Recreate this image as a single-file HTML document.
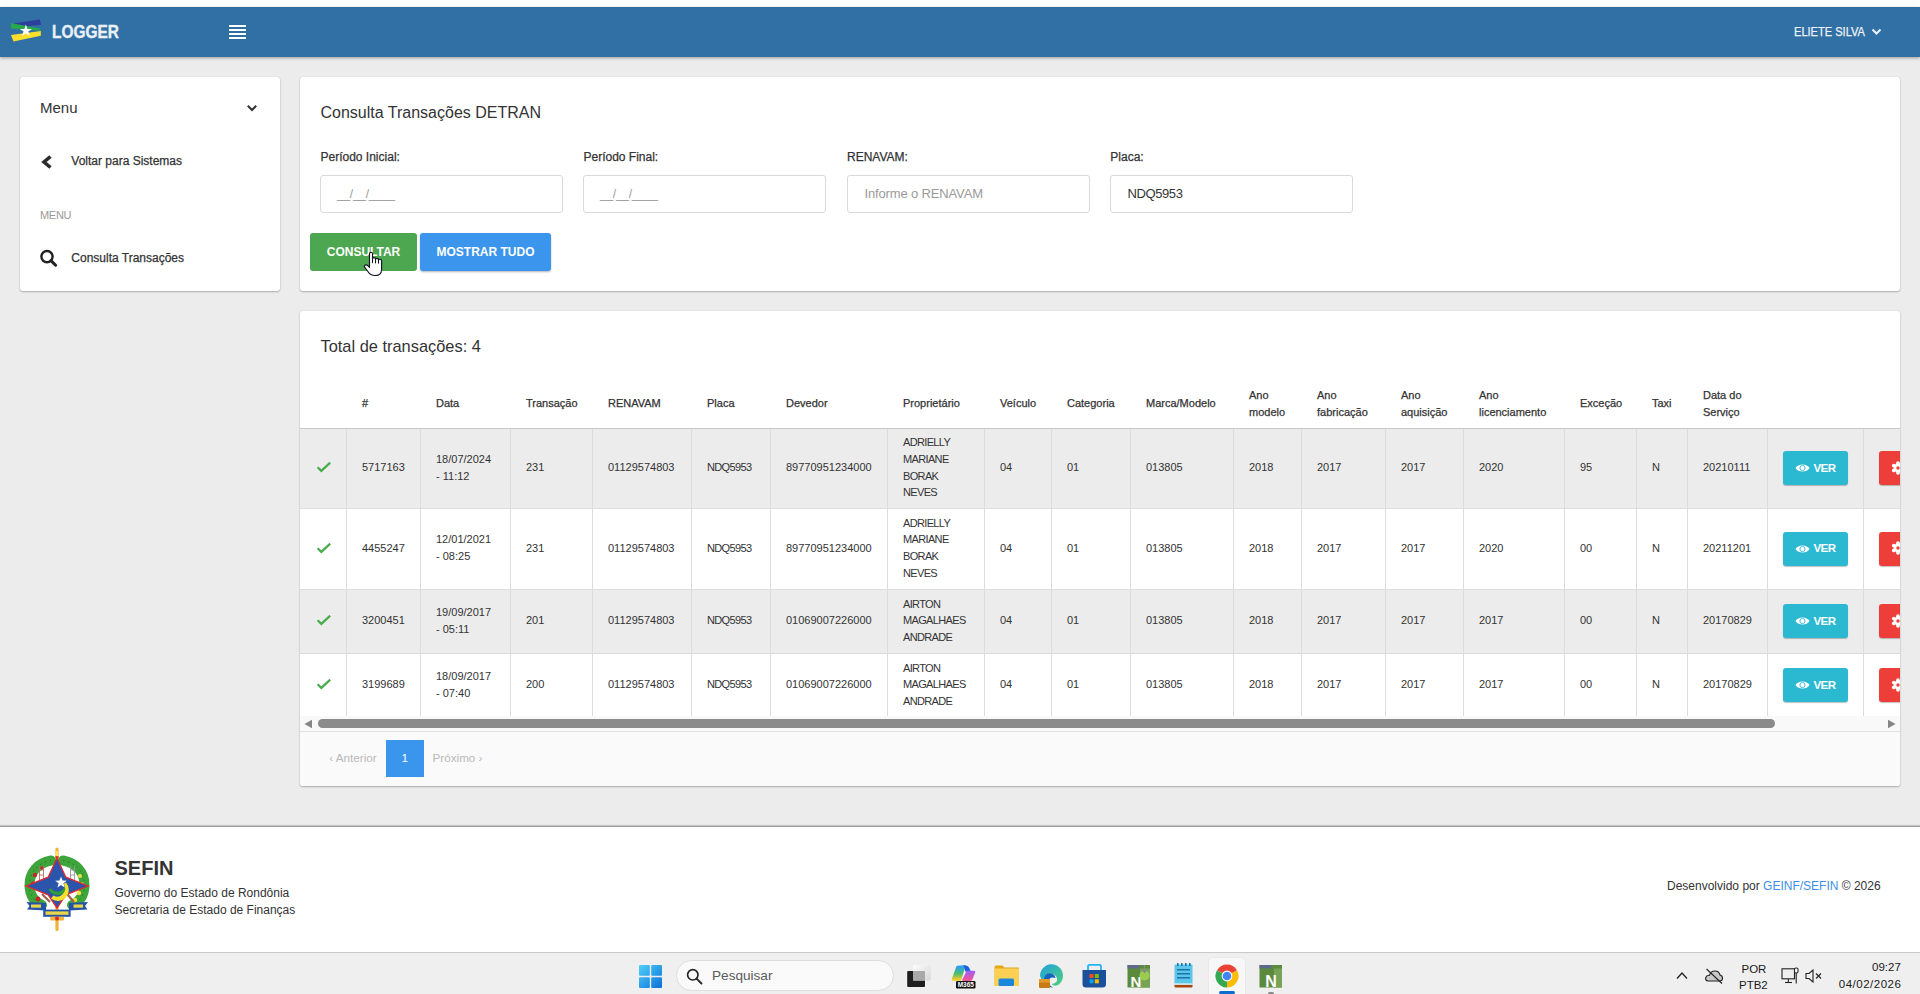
<!DOCTYPE html>
<html lang="pt-BR">
<head>
<meta charset="utf-8">
<title>Logger</title>
<style>
*{box-sizing:border-box;margin:0;padding:0}
html,body{width:1920px;height:994px;overflow:hidden}
body{position:relative;background:#ececec;font-family:"Liberation Sans",sans-serif;color:#333;font-size:12px}
.abs{position:absolute;white-space:nowrap}
.t{position:absolute;white-space:nowrap;line-height:1}
.topstrip{position:absolute;left:0;top:0;width:1920px;height:7px;background:#fff}
.header{position:absolute;left:0;top:7px;width:1920px;height:50px;background:#3170a5;box-shadow:0 1px 3px rgba(0,0,0,.35)}
.card{position:absolute;background:#fff;border-radius:3px;box-shadow:0 1px 2px rgba(0,0,0,.28),0 0 1px rgba(0,0,0,.12)}
.med{-webkit-text-stroke:0.25px currentColor}
.inp{position:absolute;top:175px;width:243px;height:38px;border:1px solid #d9d9d9;border-radius:3px;background:#fff}
.inp span{position:absolute;white-space:nowrap;line-height:1}
.ph{left:16px;top:12px;font-size:12px;color:#9a9a9a;letter-spacing:-0.25px}
.ph2{left:17px;top:11px;font-size:13px;color:#9a9a9a;letter-spacing:-0.15px}
.val{left:16.5px;top:11px;font-size:13px;color:#333;letter-spacing:-0.4px}
.btn{position:absolute;top:233px;height:38px;border-radius:3px;color:#fff;font-weight:700;font-size:12px;line-height:38px;text-align:center;white-space:nowrap}
.tbl{position:absolute;left:300px;top:379px;width:1600px;height:337px;overflow:hidden}
.stripe{position:absolute;left:0;width:1700px;background:#ececec}
.hb{position:absolute;left:0;width:1700px;height:1px;background:#dddddd}
.hb.hd{background:#c8c8c8}
.vb{position:absolute;top:50px;width:1px;height:300px;background:#dcdcdc}
.th{position:absolute;top:0;height:49px;display:flex;align-items:center;font-size:11px;line-height:17px;color:#333;-webkit-text-stroke:0.25px #333;white-space:nowrap}
.cell{position:absolute;display:flex;align-items:center;padding-bottom:2px;font-size:11px;line-height:16.6px;color:#333;white-space:nowrap}
.cell.up span{letter-spacing:-0.65px}
.ver{position:relative;width:65px;height:34px;background:#2bb9d1;border-radius:3px;box-shadow:0 1px 1px rgba(0,0,0,.25);display:flex;align-items:center;justify-content:center;color:#fff;font-weight:700;font-size:11.5px;letter-spacing:-0.5px;margin-top:1px}
.ver svg{margin-right:3px}
.del{position:relative;width:40px;height:34px;background:#ee3e3a;border-radius:3px;box-shadow:0 1px 1px rgba(0,0,0,.25);margin-top:1px}
.sbtrack{position:absolute;left:300px;top:716px;width:1600px;height:15px;background:#f9f9f9}
.pager{position:absolute;left:300px;top:731px;width:1600px;height:55px;background:#fafafa;border-top:1px solid #e3e3e3;border-radius:0 0 3px 3px}
.footer{position:absolute;left:0;top:826px;width:1920px;height:126px;background:#fff;border-top:1px solid #9a9a9a;box-shadow:0 -1px 1px rgba(0,0,0,.15)}
.taskbar{position:absolute;left:0;top:952px;width:1920px;height:42px;background:#efefef;border-top:1px solid #c9c9c9}
</style>
</head>
<body>
<div class="topstrip"></div>
<div class="header"></div>
<svg class="abs" style="left:10px;top:18px" width="34" height="26" viewBox="0 0 34 26">
  <polygon points="3,5.5 29.7,1.5 31.3,6.8 5,9.5" fill="#2d3f9c"/>
  <polygon points="1,5 1,10.4 30.5,12.8 30.5,10.8" fill="#27a84a"/>
  <polygon points="1,17 30.8,13 30.8,17.7 3.5,23.6" fill="#fbdd2c"/>
  <polygon points="15.9,6.5 17.4,10.9 22,10.9 18.3,13.6 19.7,18 15.9,15.3 12.1,18 13.5,13.6 9.8,10.9 14.4,10.9" fill="#fff"/>
</svg>
<div class="t" style="left:52px;top:22.5px;font-size:18.3px;font-weight:700;color:#eaf0f6;-webkit-text-stroke:0.35px #eaf0f6;transform:scaleX(0.846);transform-origin:0 0">LOGGER</div>
<div class="abs" style="left:229px;top:25px;width:17px;height:2px;background:#fff;box-shadow:0 0 1px rgba(20,80,140,.7)"></div>
<div class="abs" style="left:229px;top:29px;width:17px;height:2px;background:#fff;box-shadow:0 0 1px rgba(20,80,140,.7)"></div>
<div class="abs" style="left:229px;top:33px;width:17px;height:2px;background:#fff;box-shadow:0 0 1px rgba(20,80,140,.7)"></div>
<div class="abs" style="left:229px;top:37px;width:17px;height:2px;background:#fff;box-shadow:0 0 1px rgba(20,80,140,.7)"></div>
<div class="t med" style="left:1794px;top:25.8px;font-size:12.3px;color:#eef2f7;transform:scaleX(0.9);transform-origin:0 0">ELIETE SILVA</div>
<svg class="abs" style="left:1871px;top:28px" width="11" height="8" viewBox="0 0 11 8"><polyline points="1.5,1.5 5.5,5.5 9.5,1.5" fill="none" stroke="#eef2f7" stroke-width="2"/></svg>

<div class="card" style="left:20px;top:77px;width:260px;height:214px"></div>
<div class="t" style="left:40px;top:100px;font-size:15px;color:#333">Menu</div>
<svg class="abs" style="left:246px;top:104px" width="12" height="9" viewBox="0 0 12 9"><polyline points="1.8,1.8 6,6 10.2,1.8" fill="none" stroke="#333" stroke-width="2"/></svg>
<svg class="abs" style="left:40px;top:154px" width="14" height="16" viewBox="0 0 14 16"><polyline points="10.5,2.5 4,8 10.5,13.5" fill="none" stroke="#2b2b2b" stroke-width="3.6" stroke-linejoin="miter" stroke-miterlimit="3"/></svg>
<div class="t med" style="left:71.3px;top:154.8px;font-size:12px;color:#333">Voltar para Sistemas</div>
<div class="t" style="left:40px;top:210.1px;font-size:11px;color:#999;letter-spacing:-0.3px">MENU</div>
<svg class="abs" style="left:39px;top:249px" width="19" height="18" viewBox="0 0 19 18"><circle cx="8" cy="7.6" r="5.6" fill="none" stroke="#222" stroke-width="2.4"/><line x1="12" y1="11.6" x2="16.6" y2="16.2" stroke="#222" stroke-width="3" stroke-linecap="round"/></svg>
<div class="t med" style="left:71.3px;top:251.8px;font-size:12px;color:#333">Consulta Transações</div>
<div class="card" style="left:300px;top:77px;width:1600px;height:214px"></div>
<div class="t" style="left:320.5px;top:105.3px;font-size:16px;color:#333">Consulta Transações DETRAN</div>
<div class="t med" style="left:320.5px;top:150.8px;font-size:12px;color:#333">Período Inicial:</div>
<div class="t med" style="left:583.5px;top:150.8px;font-size:12px;color:#333">Período Final:</div>
<div class="t med" style="left:847px;top:150.8px;font-size:12px;color:#333">RENAVAM:</div>
<div class="t med" style="left:1110.3px;top:150.8px;font-size:12px;color:#333">Placa:</div>
<div class="inp" style="left:320px"><span class="ph">__/__/____</span></div>
<div class="inp" style="left:583px"><span class="ph">__/__/____</span></div>
<div class="inp" style="left:846.5px"><span class="ph2">Informe o RENAVAM</span></div>
<div class="inp" style="left:1110px"><span class="val">NDQ5953</span></div>
<div class="btn" style="left:310px;width:107px;background:#4da650">CONSULTAR</div>
<div class="btn" style="left:420px;width:131px;background:#3b95ec;box-shadow:0 1px 2px rgba(0,0,0,.3)">MOSTRAR TUDO</div>
<svg class="abs" style="left:362px;top:250px" width="22" height="28" viewBox="0 0 22 28">
  <path d="M7.5,4 Q7.5,2.2 9,2.2 Q10.5,2.2 10.5,4 L10.5,9 Q10.5,7.6 12,7.6 Q13.5,7.6 13.5,9 L13.5,9.6 Q13.5,8.4 15,8.4 Q16.5,8.4 16.5,10 L16.5,10.4 Q16.5,9.2 18,9.2 Q19.6,9.2 19.6,11 L19.6,19.8 Q19.6,23.2 17.5,24.4 Q15,25.7 12,25.5 Q8,25.1 5.9,21.5 L2.6,17.2 Q1.9,15.9 3,15.2 Q4.4,14.4 6,15.9 L7.5,17.4 Z" fill="#fff" stroke="#161622" stroke-width="1.15" stroke-linejoin="round"/>
  <path d="M10.5,9 L10.5,13.2 M13.5,9.6 L13.5,13.4 M16.5,10.4 L16.5,13.6" stroke="#161622" stroke-width="1"/>
</svg>
<div class="card" style="left:300px;top:311px;width:1600px;height:475px"></div>
<div class="t" style="left:320.5px;top:337.5px;font-size:16.4px;color:#333">Total de transações: 4</div>
<div class="tbl">
<div class="stripe" style="top:50px;height:79px"></div>
<div class="stripe" style="top:211px;height:63px"></div>
<div class="hb hd" style="top:49px"></div>
<div class="hb" style="top:129px"></div>
<div class="hb" style="top:210px"></div>
<div class="hb" style="top:274px"></div>
<div class="vb" style="left:46px"></div>
<div class="vb" style="left:120px"></div>
<div class="vb" style="left:210px"></div>
<div class="vb" style="left:292px"></div>
<div class="vb" style="left:391px"></div>
<div class="vb" style="left:470px"></div>
<div class="vb" style="left:587px"></div>
<div class="vb" style="left:684px"></div>
<div class="vb" style="left:751px"></div>
<div class="vb" style="left:830px"></div>
<div class="vb" style="left:933px"></div>
<div class="vb" style="left:1001px"></div>
<div class="vb" style="left:1085px"></div>
<div class="vb" style="left:1163px"></div>
<div class="vb" style="left:1264px"></div>
<div class="vb" style="left:1336px"></div>
<div class="vb" style="left:1387px"></div>
<div class="vb" style="left:1467px"></div>
<div class="vb" style="left:1563px"></div>
<div class="th" style="left:62px">#</div>
<div class="th" style="left:136px">Data</div>
<div class="th" style="left:226px">Transação</div>
<div class="th" style="left:308px">RENAVAM</div>
<div class="th" style="left:407px">Placa</div>
<div class="th" style="left:486px">Devedor</div>
<div class="th" style="left:603px">Proprietário</div>
<div class="th" style="left:700px">Veículo</div>
<div class="th" style="left:767px">Categoria</div>
<div class="th" style="left:846px">Marca/Modelo</div>
<div class="th" style="left:949px">Ano<br>modelo</div>
<div class="th" style="left:1017px">Ano<br>fabricação</div>
<div class="th" style="left:1101px">Ano<br>aquisição</div>
<div class="th" style="left:1179px">Ano<br>licenciamento</div>
<div class="th" style="left:1280px">Exceção</div>
<div class="th" style="left:1352px">Taxi</div>
<div class="th" style="left:1403px">Data do<br>Serviço</div>
<div class="cell" style="left:16px;top:50px;height:79px"><svg width="15" height="11" viewBox="0 0 15 11"><polyline points="1.6,5.3 5.3,8.9 14.2,0.6" fill="none" stroke="#46ad4a" stroke-width="2.2"/></svg></div>
<div class="cell" style="left:62px;top:50px;height:79px"><span>5717163</span></div>
<div class="cell" style="left:136px;top:50px;height:79px"><span>18/07/2024<br>- 11:12</span></div>
<div class="cell" style="left:226px;top:50px;height:79px"><span>231</span></div>
<div class="cell" style="left:308px;top:50px;height:79px"><span>01129574803</span></div>
<div class="cell up" style="left:407px;top:50px;height:79px"><span>NDQ5953</span></div>
<div class="cell" style="left:486px;top:50px;height:79px"><span>89770951234000</span></div>
<div class="cell up" style="left:603px;top:50px;height:79px"><span>ADRIELLY<br>MARIANE<br>BORAK<br>NEVES</span></div>
<div class="cell" style="left:700px;top:50px;height:79px"><span>04</span></div>
<div class="cell" style="left:767px;top:50px;height:79px"><span>01</span></div>
<div class="cell" style="left:846px;top:50px;height:79px"><span>013805</span></div>
<div class="cell" style="left:949px;top:50px;height:79px"><span>2018</span></div>
<div class="cell" style="left:1017px;top:50px;height:79px"><span>2017</span></div>
<div class="cell" style="left:1101px;top:50px;height:79px"><span>2017</span></div>
<div class="cell" style="left:1179px;top:50px;height:79px"><span>2020</span></div>
<div class="cell" style="left:1280px;top:50px;height:79px"><span>95</span></div>
<div class="cell" style="left:1352px;top:50px;height:79px"><span>N</span></div>
<div class="cell" style="left:1403px;top:50px;height:79px"><span>20210111</span></div>
<div class="cell" style="left:1483px;top:50px;height:79px"><div class="ver"><svg width="15" height="10" viewBox="0 0 15 10"><path d="M0.5,5 C3,0.2 12,0.2 14.5,5 C12,9.8 3,9.8 0.5,5Z" fill="#fff"/><circle cx="7.5" cy="5" r="2.6" fill="none" stroke="#2bb9d1" stroke-width="0.9"/></svg><span>VER</span></div></div>
<div class="cell" style="left:1579px;top:50px;height:79px"><div class="del"><svg width="14" height="14" viewBox="0 0 14 14" style="position:absolute;left:12px;top:9.5px"><g fill="#fff"><circle cx="7" cy="7" r="4.4"/><circle cx="7" cy="2.2" r="1.9"/><circle cx="7" cy="11.8" r="1.9"/><circle cx="2.85" cy="4.6" r="1.9"/><circle cx="11.15" cy="4.6" r="1.9"/><circle cx="2.85" cy="9.4" r="1.9"/><circle cx="11.15" cy="9.4" r="1.9"/></g><circle cx="7" cy="7" r="1.7" fill="#ee3e3a"/></svg></div></div>
<div class="cell" style="left:16px;top:130px;height:80px"><svg width="15" height="11" viewBox="0 0 15 11"><polyline points="1.6,5.3 5.3,8.9 14.2,0.6" fill="none" stroke="#46ad4a" stroke-width="2.2"/></svg></div>
<div class="cell" style="left:62px;top:130px;height:80px"><span>4455247</span></div>
<div class="cell" style="left:136px;top:130px;height:80px"><span>12/01/2021<br>- 08:25</span></div>
<div class="cell" style="left:226px;top:130px;height:80px"><span>231</span></div>
<div class="cell" style="left:308px;top:130px;height:80px"><span>01129574803</span></div>
<div class="cell up" style="left:407px;top:130px;height:80px"><span>NDQ5953</span></div>
<div class="cell" style="left:486px;top:130px;height:80px"><span>89770951234000</span></div>
<div class="cell up" style="left:603px;top:130px;height:80px"><span>ADRIELLY<br>MARIANE<br>BORAK<br>NEVES</span></div>
<div class="cell" style="left:700px;top:130px;height:80px"><span>04</span></div>
<div class="cell" style="left:767px;top:130px;height:80px"><span>01</span></div>
<div class="cell" style="left:846px;top:130px;height:80px"><span>013805</span></div>
<div class="cell" style="left:949px;top:130px;height:80px"><span>2018</span></div>
<div class="cell" style="left:1017px;top:130px;height:80px"><span>2017</span></div>
<div class="cell" style="left:1101px;top:130px;height:80px"><span>2017</span></div>
<div class="cell" style="left:1179px;top:130px;height:80px"><span>2020</span></div>
<div class="cell" style="left:1280px;top:130px;height:80px"><span>00</span></div>
<div class="cell" style="left:1352px;top:130px;height:80px"><span>N</span></div>
<div class="cell" style="left:1403px;top:130px;height:80px"><span>20211201</span></div>
<div class="cell" style="left:1483px;top:130px;height:80px"><div class="ver"><svg width="15" height="10" viewBox="0 0 15 10"><path d="M0.5,5 C3,0.2 12,0.2 14.5,5 C12,9.8 3,9.8 0.5,5Z" fill="#fff"/><circle cx="7.5" cy="5" r="2.6" fill="none" stroke="#2bb9d1" stroke-width="0.9"/></svg><span>VER</span></div></div>
<div class="cell" style="left:1579px;top:130px;height:80px"><div class="del"><svg width="14" height="14" viewBox="0 0 14 14" style="position:absolute;left:12px;top:9.5px"><g fill="#fff"><circle cx="7" cy="7" r="4.4"/><circle cx="7" cy="2.2" r="1.9"/><circle cx="7" cy="11.8" r="1.9"/><circle cx="2.85" cy="4.6" r="1.9"/><circle cx="11.15" cy="4.6" r="1.9"/><circle cx="2.85" cy="9.4" r="1.9"/><circle cx="11.15" cy="9.4" r="1.9"/></g><circle cx="7" cy="7" r="1.7" fill="#ee3e3a"/></svg></div></div>
<div class="cell" style="left:16px;top:211px;height:63px"><svg width="15" height="11" viewBox="0 0 15 11"><polyline points="1.6,5.3 5.3,8.9 14.2,0.6" fill="none" stroke="#46ad4a" stroke-width="2.2"/></svg></div>
<div class="cell" style="left:62px;top:211px;height:63px"><span>3200451</span></div>
<div class="cell" style="left:136px;top:211px;height:63px"><span>19/09/2017<br>- 05:11</span></div>
<div class="cell" style="left:226px;top:211px;height:63px"><span>201</span></div>
<div class="cell" style="left:308px;top:211px;height:63px"><span>01129574803</span></div>
<div class="cell up" style="left:407px;top:211px;height:63px"><span>NDQ5953</span></div>
<div class="cell" style="left:486px;top:211px;height:63px"><span>01069007226000</span></div>
<div class="cell up" style="left:603px;top:211px;height:63px"><span>AIRTON<br>MAGALHAES<br>ANDRADE</span></div>
<div class="cell" style="left:700px;top:211px;height:63px"><span>04</span></div>
<div class="cell" style="left:767px;top:211px;height:63px"><span>01</span></div>
<div class="cell" style="left:846px;top:211px;height:63px"><span>013805</span></div>
<div class="cell" style="left:949px;top:211px;height:63px"><span>2018</span></div>
<div class="cell" style="left:1017px;top:211px;height:63px"><span>2017</span></div>
<div class="cell" style="left:1101px;top:211px;height:63px"><span>2017</span></div>
<div class="cell" style="left:1179px;top:211px;height:63px"><span>2017</span></div>
<div class="cell" style="left:1280px;top:211px;height:63px"><span>00</span></div>
<div class="cell" style="left:1352px;top:211px;height:63px"><span>N</span></div>
<div class="cell" style="left:1403px;top:211px;height:63px"><span>20170829</span></div>
<div class="cell" style="left:1483px;top:211px;height:63px"><div class="ver"><svg width="15" height="10" viewBox="0 0 15 10"><path d="M0.5,5 C3,0.2 12,0.2 14.5,5 C12,9.8 3,9.8 0.5,5Z" fill="#fff"/><circle cx="7.5" cy="5" r="2.6" fill="none" stroke="#2bb9d1" stroke-width="0.9"/></svg><span>VER</span></div></div>
<div class="cell" style="left:1579px;top:211px;height:63px"><div class="del"><svg width="14" height="14" viewBox="0 0 14 14" style="position:absolute;left:12px;top:9.5px"><g fill="#fff"><circle cx="7" cy="7" r="4.4"/><circle cx="7" cy="2.2" r="1.9"/><circle cx="7" cy="11.8" r="1.9"/><circle cx="2.85" cy="4.6" r="1.9"/><circle cx="11.15" cy="4.6" r="1.9"/><circle cx="2.85" cy="9.4" r="1.9"/><circle cx="11.15" cy="9.4" r="1.9"/></g><circle cx="7" cy="7" r="1.7" fill="#ee3e3a"/></svg></div></div>
<div class="cell" style="left:16px;top:275px;height:63px"><svg width="15" height="11" viewBox="0 0 15 11"><polyline points="1.6,5.3 5.3,8.9 14.2,0.6" fill="none" stroke="#46ad4a" stroke-width="2.2"/></svg></div>
<div class="cell" style="left:62px;top:275px;height:63px"><span>3199689</span></div>
<div class="cell" style="left:136px;top:275px;height:63px"><span>18/09/2017<br>- 07:40</span></div>
<div class="cell" style="left:226px;top:275px;height:63px"><span>200</span></div>
<div class="cell" style="left:308px;top:275px;height:63px"><span>01129574803</span></div>
<div class="cell up" style="left:407px;top:275px;height:63px"><span>NDQ5953</span></div>
<div class="cell" style="left:486px;top:275px;height:63px"><span>01069007226000</span></div>
<div class="cell up" style="left:603px;top:275px;height:63px"><span>AIRTON<br>MAGALHAES<br>ANDRADE</span></div>
<div class="cell" style="left:700px;top:275px;height:63px"><span>04</span></div>
<div class="cell" style="left:767px;top:275px;height:63px"><span>01</span></div>
<div class="cell" style="left:846px;top:275px;height:63px"><span>013805</span></div>
<div class="cell" style="left:949px;top:275px;height:63px"><span>2018</span></div>
<div class="cell" style="left:1017px;top:275px;height:63px"><span>2017</span></div>
<div class="cell" style="left:1101px;top:275px;height:63px"><span>2017</span></div>
<div class="cell" style="left:1179px;top:275px;height:63px"><span>2017</span></div>
<div class="cell" style="left:1280px;top:275px;height:63px"><span>00</span></div>
<div class="cell" style="left:1352px;top:275px;height:63px"><span>N</span></div>
<div class="cell" style="left:1403px;top:275px;height:63px"><span>20170829</span></div>
<div class="cell" style="left:1483px;top:275px;height:63px"><div class="ver"><svg width="15" height="10" viewBox="0 0 15 10"><path d="M0.5,5 C3,0.2 12,0.2 14.5,5 C12,9.8 3,9.8 0.5,5Z" fill="#fff"/><circle cx="7.5" cy="5" r="2.6" fill="none" stroke="#2bb9d1" stroke-width="0.9"/></svg><span>VER</span></div></div>
<div class="cell" style="left:1579px;top:275px;height:63px"><div class="del"><svg width="14" height="14" viewBox="0 0 14 14" style="position:absolute;left:12px;top:9.5px"><g fill="#fff"><circle cx="7" cy="7" r="4.4"/><circle cx="7" cy="2.2" r="1.9"/><circle cx="7" cy="11.8" r="1.9"/><circle cx="2.85" cy="4.6" r="1.9"/><circle cx="11.15" cy="4.6" r="1.9"/><circle cx="2.85" cy="9.4" r="1.9"/><circle cx="11.15" cy="9.4" r="1.9"/></g><circle cx="7" cy="7" r="1.7" fill="#ee3e3a"/></svg></div></div>
</div>

<div class="sbtrack"></div>
<svg class="abs" style="left:304px;top:719px" width="9" height="10" viewBox="0 0 9 10"><polygon points="0.5,5 8,0.8 8,9.2" fill="#858585"/></svg>
<div class="abs" style="left:318px;top:719px;width:1457px;height:9px;border-radius:4.5px;background:#8b8b8b"></div>
<svg class="abs" style="left:1887px;top:719px" width="9" height="10" viewBox="0 0 9 10"><polygon points="8.5,5 1,0.8 1,9.2" fill="#858585"/></svg>
<div class="pager"></div>
<div class="t" style="left:329.3px;top:752px;font-size:11.7px;color:#b9b9b9">‹ Anterior</div>
<div class="abs" style="left:386px;top:740px;width:38px;height:37px;background:#3a95ed"></div>
<div class="t" style="left:401.5px;top:752px;font-size:11.7px;color:#fff">1</div>
<div class="t" style="left:432.5px;top:752px;font-size:11.7px;color:#b9b9b9">Próximo ›</div>
<div class="footer"></div>
<svg class="abs" style="left:20px;top:842px" width="76" height="94" viewBox="0 0 76 94">
  <rect x="35.4" y="5.5" width="3.2" height="83.5" rx="1.6" fill="#efb43a"/>
  <rect x="35.9" y="9" width="2.2" height="5" fill="#fde25c"/>
  <rect x="35.4" y="14" width="3.2" height="2.5" fill="#e2402d"/>
  <path d="M31,18.5 C18,21 9,30 9.5,44 C10,54 15,60 22,63" fill="none" stroke="#3ea53a" stroke-width="10" stroke-linecap="round"/>
  <path d="M43,18.5 C56,21 65,30 64.5,44 C64,54 59,60 52,63" fill="none" stroke="#3ea53a" stroke-width="10" stroke-linecap="round"/>
  <path d="M31,18.5 C18,21 9,30 9.5,44 C10,54 15,60 22,63" fill="none" stroke="#237a2a" stroke-width="1" stroke-dasharray="1.5 3.5"/>
  <path d="M43,18.5 C56,21 65,30 64.5,44 C64,54 59,60 52,63" fill="none" stroke="#237a2a" stroke-width="1" stroke-dasharray="1.5 3.5"/>
  <circle cx="15" cy="33" r="2.2" fill="#c8262a"/><circle cx="13" cy="41" r="1.8" fill="#c8262a"/><circle cx="18" cy="57" r="2.4" fill="#c8262a"/><circle cx="22" cy="26" r="1.8" fill="#c8262a"/>
  <circle cx="60" cy="34" r="2" fill="#f3e03c"/><circle cx="62" cy="42" r="1.8" fill="#f3e03c"/><circle cx="59" cy="51" r="2.2" fill="#f3e03c"/><circle cx="55" cy="58" r="2.2" fill="#f3e03c"/>
  <path d="M19.5,24 L19.5,38 M23.5,24 L23.5,38 M19.5,28 L23.5,28 M19.5,33 L23.5,33" stroke="#b07060" stroke-width="0.9"/>
  <path d="M50.5,24 L50.5,38 M54.5,24 L54.5,38 M50.5,28 L54.5,28 M50.5,33 L54.5,33" stroke="#9a9a9a" stroke-width="0.9"/>
  <path d="M22,52 L30,60 M47,52 L54,60" stroke="#a06050" stroke-width="2.2"/>
  <polygon points="37,16 45.8,35.2 68,44 45.8,52.8 37,66 28.2,52.8 6,44 28.2,35.2" fill="#2b55ad" stroke="#e3262b" stroke-width="1.3" stroke-linejoin="miter"/>
  <path d="M28.5,47 A10,10 0 0 0 47.5,45 L44.5,44.5 A7.3,7.3 0 0 1 31.5,46.5 Z" fill="#2f9e3a"/>
  <path d="M31,56.5 A11,11 0 0 0 46,40.5 L43.5,42 A7.8,7.8 0 0 1 33.5,53.5 Z" fill="#f4df2d"/>
  <polygon points="41,34.5 42.5,38.6 46.8,38.7 43.4,41.3 44.6,45.4 41,43 37.4,45.4 38.6,41.3 35.2,38.7 39.5,38.6" fill="#fff"/>
  <polygon points="6.5,60 26,61 26,68.5 7,67.5 9.5,64" fill="#2553a8"/>
  <polygon points="68,60 49,61 49,68.5 67.5,67.5 65,64" fill="#2553a8"/>
  <rect x="11" y="62.5" width="10" height="3.2" fill="#e9d646"/>
  <rect x="53.5" y="62.5" width="9.5" height="3.2" fill="#e9d646"/>
  <rect x="23.2" y="67.6" width="27.4" height="7.2" fill="#2553a8"/>
  <rect x="25.5" y="69.4" width="23" height="3.4" fill="#e9d646"/>
  <rect x="30.2" y="74.8" width="13.8" height="3.6" rx="1" fill="#f2b233"/>
  <circle cx="37" cy="76.6" r="2" fill="#d92b2b"/>
</svg>
<div class="t" style="left:114.5px;top:858px;font-size:20px;font-weight:700;color:#333">SEFIN</div>
<div class="t" style="left:114.5px;top:887px;font-size:12px;color:#333">Governo do Estado de Rondônia</div>
<div class="t" style="left:114.5px;top:903.5px;font-size:12px;color:#333">Secretaria de Estado de Finanças</div>
<div class="t" style="left:1667px;top:879.8px;font-size:12px;color:#333">Desenvolvido por <span style="color:#3d8ee8">GEINF/SEFIN</span> © 2026</div>
<div class="taskbar"></div>
<svg class="abs" style="left:639px;top:965px" width="23" height="23" viewBox="0 0 23 23">
  <defs><linearGradient id="wg" gradientUnits="userSpaceOnUse" x1="0" y1="0" x2="23" y2="23"><stop offset="0" stop-color="#4fd0fb"/><stop offset="1" stop-color="#0a6fd6"/></linearGradient></defs>
  <rect x="0" y="0" width="10.8" height="10.8" rx="1" fill="url(#wg)"/><rect x="12.2" y="0" width="10.8" height="10.8" rx="1" fill="url(#wg)"/>
  <rect x="0" y="12.2" width="10.8" height="10.8" rx="1" fill="url(#wg)"/><rect x="12.2" y="12.2" width="10.8" height="10.8" rx="1" fill="url(#wg)"/>
</svg>
<div class="abs" style="left:676px;top:960px;width:218px;height:31px;border-radius:16px;background:#fafafa;border:1px solid #dedede"></div>
<svg class="abs" style="left:686px;top:968px" width="17" height="17" viewBox="0 0 17 17"><circle cx="6.8" cy="6.8" r="5.2" fill="none" stroke="#262626" stroke-width="1.7"/><line x1="10.6" y1="10.6" x2="15.5" y2="15.5" stroke="#262626" stroke-width="1.9" stroke-linecap="round"/></svg>
<div class="t" style="left:712px;top:968.5px;font-size:13.6px;color:#5b5b5b">Pesquisar</div>
<svg class="abs" style="left:907px;top:965px" width="24" height="23" viewBox="0 0 24 23">
  <defs><linearGradient id="tv" x1="0" y1="0" x2="1" y2="1"><stop offset="0" stop-color="#fdfdfd"/><stop offset="1" stop-color="#d6d6d6"/></linearGradient></defs>
  <rect x="0.2" y="6" width="17.8" height="16" rx="1" fill="#1e1e1e"/>
  <rect x="6" y="0" width="17.7" height="15.6" rx="1" fill="url(#tv)"/>
  <rect x="6" y="6" width="12" height="9.6" fill="#a9a9a9"/>
</svg>
<svg class="abs" style="left:951px;top:965px" width="25" height="24" viewBox="0 0 25 24">
  <defs><linearGradient id="m1" x1="0" y1="0" x2="0" y2="1"><stop offset="0" stop-color="#2a9ef5"/><stop offset=".55" stop-color="#4cc06a"/><stop offset="1" stop-color="#f1c92c"/></linearGradient>
  <linearGradient id="m2" x1="0" y1="0" x2="0" y2="1"><stop offset="0" stop-color="#a65ef2"/><stop offset="1" stop-color="#f25596"/></linearGradient></defs>
  <path d="M6.5,2 L13,1.5 L9,14.5 L2,14.5 Z" fill="url(#m1)" stroke="url(#m1)" stroke-width="2.6" stroke-linejoin="round"/>
  <path d="M12.5,0.3 Q17,0 18.5,3.5 L19.8,6.5 L14.5,6.8 Z" fill="#1d5fe0"/>
  <path d="M16.5,7 L23,7 L20,14.5 L12.5,15 Z" fill="url(#m2)" stroke="url(#m2)" stroke-width="2.6" stroke-linejoin="round"/>
  <rect x="5" y="16" width="19.5" height="7.5" rx="1.2" fill="#111"/>
  <text x="14.75" y="22.2" font-family="Liberation Sans" font-size="6.4" font-weight="700" fill="#fff" text-anchor="middle">M365</text>
</svg>
<svg class="abs" style="left:994px;top:965px" width="26" height="22" viewBox="0 0 26 22">
  <path d="M0.5,2 Q0.5,0.5 2,0.5 L8.5,0.5 L10.5,2.5 L24,2.5 Q25,2.5 25,3.5 L25,21 L0.5,21 Z" fill="#e5a71a"/>
  <rect x="0.5" y="3.5" width="24.5" height="17.5" fill="#fcd153"/>
  <rect x="4.5" y="13.5" width="15.5" height="7.5" rx="1.5" fill="#1b87d8"/>
</svg>
<svg class="abs" style="left:1039px;top:964px" width="25" height="24" viewBox="0 0 25 24">
  <defs><linearGradient id="eg" x1="0" y1="0" x2="1" y2="1"><stop offset="0" stop-color="#1fa1e0"/><stop offset="1" stop-color="#4fd07a"/></linearGradient></defs>
  <path d="M1,12 A11.5,11.5 0 1 1 20,20.5 Q16,23 12.5,20 Q20,19 17.5,13 Q14,8 8.5,10 Q4,12 5,17 Q1.5,15 1,12 Z" fill="url(#eg)"/>
  <path d="M5,17 Q4,11 9,9.5 Q15,8.5 16.5,14 Q11,12 9,17 Q9.5,21 14,23.5 Q7,24 5,17Z" fill="#1565c0"/>
  <rect x="0" y="15" width="11" height="9" rx="1" fill="#c77a16"/>
  <rect x="0" y="15" width="11" height="3.5" fill="#e39a2a"/>
</svg>
<svg class="abs" style="left:1082px;top:964px" width="25" height="24" viewBox="0 0 25 24">
  <path d="M6,6 L6,2.5 Q6,0.8 8,0.8 L17,0.8 Q19,0.8 19,2.5 L19,6" fill="none" stroke="#27b4f5" stroke-width="1.8"/>
  <path d="M0.5,6 L24,6 L24,20 Q24,23.5 20.5,23.5 L4,23.5 Q0.5,23.5 0.5,20 Z" fill="#1a4f9a"/>
  <rect x="7.5" y="10" width="4" height="4" fill="#f25022"/><rect x="12.8" y="10" width="4" height="4" fill="#7fba00"/>
  <rect x="7.5" y="15.3" width="4" height="4" fill="#00a4ef"/><rect x="12.8" y="15.3" width="4" height="4" fill="#ffb900"/>
</svg>
<svg class="abs" style="left:1127px;top:964px" width="24" height="24" viewBox="0 0 24 24">
  <rect x="0.5" y="1" width="22.5" height="22.5" fill="#5c8a3c"/>
  <rect x="0.5" y="1" width="12" height="3.5" fill="#5e6a8c"/>
  <rect x="13" y="4.5" width="10" height="19" fill="#77a356"/>
  <text x="9" y="22.5" font-family="Liberation Sans" font-size="15" font-weight="700" fill="#fff" text-anchor="middle">N</text>
  <circle cx="17.5" cy="11.5" r="5" fill="#9ccc4f"/>
  <path d="M17.5,1 L17.5,8 M15,5.5 L17.5,8.5 L20,5.5" fill="none" stroke="#888" stroke-width="1.2"/>
</svg>
<svg class="abs" style="left:1174px;top:963px" width="19" height="25" viewBox="0 0 19 25">
  <rect x="0.5" y="1.5" width="18" height="21" rx="1" fill="#5cc6ea"/>
  <rect x="0.5" y="21.5" width="18" height="3" rx="1" fill="#a8470f"/>
  <rect x="0.5" y="20.5" width="18" height="1.2" fill="#fff"/>
  <rect x="3" y="0" width="1.6" height="3" fill="#1a73a8"/><rect x="7" y="0" width="1.6" height="3" fill="#1a73a8"/><rect x="11" y="0" width="1.6" height="3" fill="#1a73a8"/><rect x="15" y="0" width="1.6" height="3" fill="#1a73a8"/>
  <rect x="3" y="6" width="13" height="1.5" fill="#1a73a8"/><rect x="3" y="10" width="13" height="1.5" fill="#1a73a8"/><rect x="3" y="14" width="13" height="1.5" fill="#1a73a8"/>
</svg>
<div class="abs" style="left:1208px;top:957px;width:38px;height:37px;border-radius:5px 5px 0 0;background:#f7f7f7;border:1px solid #e9e9e9;border-bottom:none"></div>
<svg class="abs" style="left:1215px;top:964px" width="24" height="24" viewBox="0 0 24 24">
  <path d="M12,12 L21.96,6.25 A11.5,11.5 0 0 0 2.04,6.25 Z" fill="#e94335"/>
  <path d="M12,12 L12,23.5 A11.5,11.5 0 0 0 21.96,6.25 Z" fill="#fbbc04"/>
  <path d="M12,12 L2.04,6.25 A11.5,11.5 0 0 0 12,23.5 Z" fill="#34a853"/>
  <circle cx="12" cy="12" r="5.4" fill="#fff"/>
  <circle cx="12" cy="12" r="4.3" fill="#4285f4"/>
</svg>
<div class="abs" style="left:1219px;top:991px;width:16px;height:3px;border-radius:2px;background:#0f6cd0"></div>
<svg class="abs" style="left:1259px;top:964px" width="24" height="24" viewBox="0 0 24 24">
  <rect x="0.5" y="1" width="22.5" height="22.5" fill="#5c8a3c"/>
  <rect x="0.5" y="1" width="12" height="3.5" fill="#5e6a8c"/>
  <rect x="15" y="4.5" width="8" height="19" fill="#77a356"/>
  <text x="12" y="22.5" font-family="Liberation Sans" font-size="16" font-weight="700" fill="#fff" text-anchor="middle">N</text>
</svg>
<div class="abs" style="left:1268px;top:991.5px;width:6px;height:3px;border-radius:2px;background:#8a8a8a"></div>
<svg class="abs" style="left:1676px;top:971px" width="12" height="9" viewBox="0 0 12 9"><polyline points="1,7.5 6,2 11,7.5" fill="none" stroke="#222" stroke-width="1.3"/></svg>
<svg class="abs" style="left:1705px;top:968px" width="19" height="16" viewBox="0 0 19 16"><path d="M3,13 Q0,12.5 0.8,9.5 Q1.5,7 4.5,7.3 Q5.5,3 10,3 Q14,3 15,7 Q17.5,7.5 17.5,10.5 Q17.5,13 14.5,13 Z" fill="#c9c9c9" stroke="#222" stroke-width="1.1"/><line x1="1.5" y1="1" x2="17" y2="15.5" stroke="#222" stroke-width="1.1"/></svg>
<div class="t" style="left:1741.5px;top:963.5px;font-size:11.5px;color:#1a1a1a">POR</div>
<div class="t" style="left:1739px;top:980.2px;font-size:11.5px;color:#1a1a1a">PTB2</div>
<svg class="abs" style="left:1781px;top:967px" width="19" height="18" viewBox="0 0 19 18"><rect x="1" y="1.8" width="12.5" height="10" fill="none" stroke="#222" stroke-width="1.1"/><line x1="4" y1="15.5" x2="11" y2="15.5" stroke="#222" stroke-width="1.1"/><line x1="7.3" y1="12" x2="7.3" y2="15.5" stroke="#222" stroke-width="1.1"/><rect x="13.5" y="1" width="3.5" height="5" rx="1.5" fill="#fff" stroke="#222" stroke-width="1.1"/><line x1="15.2" y1="6" x2="15.2" y2="16.5" stroke="#222" stroke-width="1.1"/></svg>
<svg class="abs" style="left:1805px;top:969px" width="18" height="14" viewBox="0 0 18 14"><path d="M1,4.5 L4,4.5 L8,1 L8,13 L4,9.5 L1,9.5 Z" fill="none" stroke="#222" stroke-width="1.1"/><path d="M11,4.5 L16,9.5 M16,4.5 L11,9.5" stroke="#222" stroke-width="1.1"/></svg>
<div class="t" style="left:1872px;top:962.2px;font-size:11.5px;color:#1a1a1a">09:27</div>
<div class="t" style="left:1838.8px;top:978.5px;font-size:11.5px;color:#1a1a1a;letter-spacing:0.5px">04/02/2026</div>
</body>
</html>
